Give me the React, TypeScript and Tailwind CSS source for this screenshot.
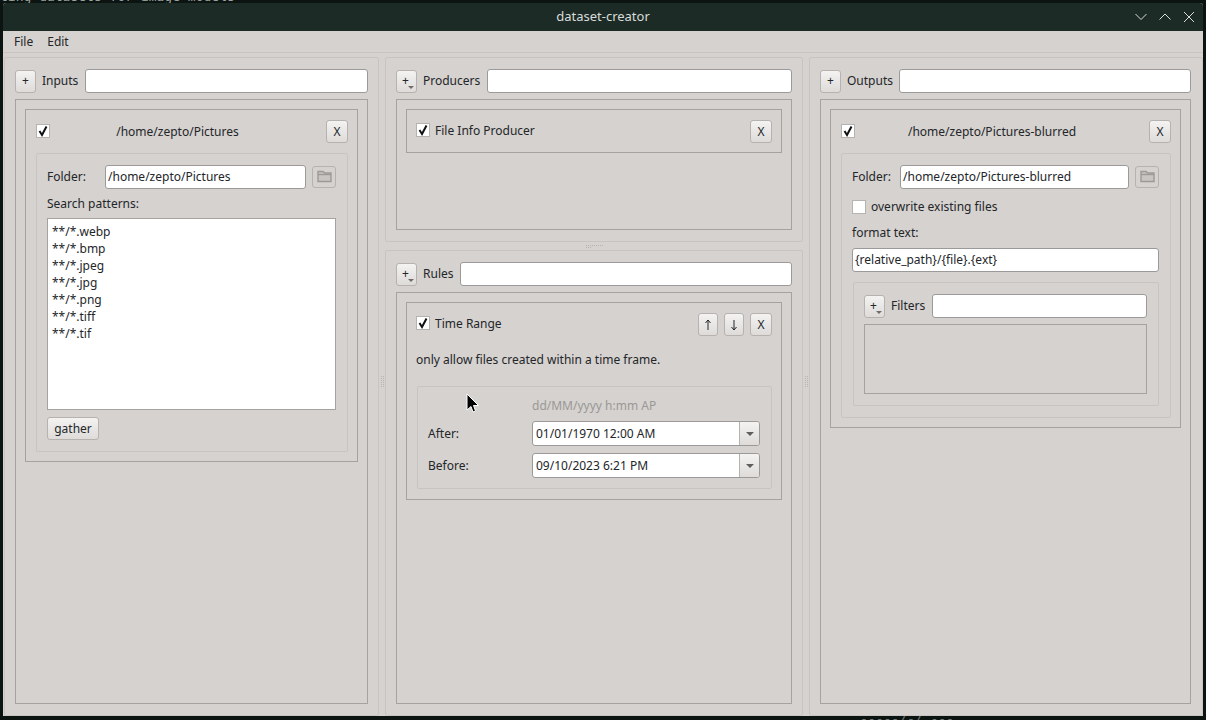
import React from 'react';

const sans = "font-['Noto_Sans',sans-serif]";

function PushButton({ children, className = '' }: { children?: React.ReactNode; className?: string }) {
  return (
    <div className={`relative flex shrink-0 items-center justify-center rounded-[3px] border border-[#b5b2af] bg-gradient-to-b from-[#f4f3f2] to-[#dedbd9] text-[#232629] ${className}`}>
      {children}
    </div>
  );
}

function MenuButton() {
  return (
    <PushButton className="h-[23px] w-[21px]">
      <span className="ml-[-2px]">+</span>
      <span className="absolute bottom-[3px] right-[2px] h-0 w-0 border-x-[3px] border-t-[3px] border-x-transparent border-t-[#6f6e6d]" />
    </PushButton>
  );
}

function TextBox({ value, className = '' }: { value?: string; className?: string }) {
  return (
    <div className={`flex h-[24px] items-center rounded-[3px] border border-[#9c9a98] bg-white pl-[2px] text-[#232629] ${className}`}>
      {value}
    </div>
  );
}

function Check({ on = true }: { on?: boolean }) {
  return (
    <div className="flex h-[14px] w-[14px] shrink-0 items-center justify-center border border-[#b5b2af] bg-white">
      {on && (
        <svg width="12" height="12" viewBox="0 0 12 12">
          <path d="M2.5 6 L5 10 L9.5 1.5" fill="none" stroke="#111" strokeWidth="2" />
        </svg>
      )}
    </div>
  );
}

function Arrow({ down = false }: { down?: boolean }) {
  return (
    <svg width="8" height="12" viewBox="0 0 8 12" className={down ? 'rotate-180' : ''}>
      <path d="M4 1 V11 M1.5 4 L4 1 L6.5 4" fill="none" stroke="#232629" strokeWidth="1" />
    </svg>
  );
}

function FolderButton() {
  return (
    <PushButton className="h-[22px] w-[24px] !bg-none bg-[#d6d2cf]">
      <svg width="15" height="13" viewBox="0 0 15 13">
        <path d="M1 11.5 V1.5 H6 L7.5 3 H14 V11.5 Z" fill="#c8c5c2" stroke="#9c9a98" strokeWidth="1.4" />
        <path d="M1 4.5 H14" stroke="#9c9a98" strokeWidth="1.4" />
      </svg>
    </PushButton>
  );
}

function Combo({ value }: { value: string }) {
  return (
    <div className="flex h-[25px] w-[228px] items-center rounded-[3px] border border-[#9c9a98] bg-white">
      <span className="flex-1 pl-[3px] text-[#232629]">{value}</span>
      <div className="flex h-full w-[20px] items-center justify-center rounded-r-[3px] border-l border-[#b5b2af] bg-gradient-to-b from-[#f4f3f2] to-[#dedbd9]">
        <span className="h-0 w-0 border-x-[4px] border-t-[4px] border-x-transparent border-t-[#5f5e5d]" />
      </div>
    </div>
  );
}

function Patterns() {
  const items = ['**/*.webp', '**/*.bmp', '**/*.jpeg', '**/*.jpg', '**/*.png', '**/*.tiff', '**/*.tif'];
  return (
    <div className="mt-[5px] h-[192px] w-[289px] border border-[#a5a29f] bg-white pl-[4px] pt-[4px]">
      {items.map((item) => (
        <div key={item} className="h-[17px] leading-[17px] text-[#232629]">{item}</div>
      ))}
    </div>
  );
}

function Dots({ vertical = false }: { vertical?: boolean }) {
  return (
    <div className={`grid gap-[1px] ${vertical ? 'grid-cols-2' : 'grid-cols-9'}`}>
      {Array.from({ length: 12 }).map((_, i) => (
        <span key={i} className="h-[1px] w-[1px] bg-[#b5b2af]" />
      ))}
    </div>
  );
}

function InputsPanel() {
  return (
    <section className="flex h-full w-[375px] shrink-0 flex-col rounded-[2px] border border-[#c8c4c1] px-[10px] pb-[11px] pt-[11px]">
      <div className="flex h-[24px] items-center">
        <PushButton className="h-[23px] w-[21px]">+</PushButton>
        <span className="ml-[6px] mr-[7px]">Inputs</span>
        <TextBox className="flex-1" />
      </div>
      <div className="mt-[6px] flex-1 border border-[#a5a29f] px-[9px] pt-[9px]">
        <div className="h-[353px] border border-[#a5a29f] pl-[10px] pr-[9px] pt-[10px]">
          <div className="flex h-[23px] items-center">
            <div className="mb-[2px]"><Check /></div>
            <span className="flex-1 pr-[21px] text-center">/home/zepto/Pictures</span>
            <PushButton className="h-[23px] w-[22px]">X</PushButton>
          </div>
          <div className="mt-[10px] h-[299px] w-[312px] rounded-[2px] border border-[#c8c4c1] px-[10px] pt-[11px]">
            <div className="flex h-[24px] items-center">
              <span className="w-[58px]">Folder:</span>
              <TextBox className="w-[201px]" value="/home/zepto/Pictures" />
              <div className="mb-[1px] ml-[6px]"><FolderButton /></div>
            </div>
            <div className="mt-[6px] h-[18px] leading-[18px]">Search patterns:</div>
            <Patterns />
            <PushButton className="mt-[7px] h-[23px] w-[52px]">gather</PushButton>
          </div>
        </div>
      </div>
    </section>
  );
}

function ProducersPanel() {
  return (
    <section className="h-[185px] shrink-0 rounded-[2px] border border-[#c8c4c1] px-[10px] pt-[11px]">
      <div className="flex h-[24px] items-center">
        <MenuButton />
        <span className="ml-[6px] mr-[7px]">Producers</span>
        <TextBox className="flex-1" />
      </div>
      <div className="mt-[6px] h-[131px] border border-[#a5a29f] px-[9px] pt-[9px]">
        <div className="flex h-[44px] items-start border border-[#a5a29f] pl-[9px] pr-[9px] pt-[10px]">
          <div className="mt-[3px]"><Check /></div>
          <span className="ml-[5px] flex-1 pt-[2px] leading-[18px]">File Info Producer</span>
          <PushButton className="h-[23px] w-[22px]">X</PushButton>
        </div>
      </div>
    </section>
  );
}

function RulesPanel() {
  return (
    <section className="min-h-0 flex-1 rounded-[2px] border border-[#c8c4c1] px-[10px] pt-[11px]">
      <div className="flex h-[24px] items-center">
        <MenuButton />
        <span className="ml-[6px] mr-[6px]">Rules</span>
        <TextBox className="flex-1" />
      </div>
      <div className="mt-[6px] h-[412px] border border-[#a5a29f] px-[9px] pt-[9px]">
        <div className="h-[198px] border border-[#a5a29f] pl-[9px] pr-[9px] pt-[10px]">
          <div className="flex items-start">
            <div className="mt-[3px]"><Check /></div>
            <span className="ml-[5px] flex-1 pt-[2px] leading-[18px]">Time Range</span>
            <PushButton className="h-[23px] w-[20px]"><Arrow /></PushButton>
            <PushButton className="ml-[6px] h-[23px] w-[20px]"><Arrow down /></PushButton>
            <PushButton className="ml-[6px] h-[23px] w-[22px]">X</PushButton>
          </div>
          <div className="mt-[15px] h-[18px] leading-[18px]">only allow files created within a time frame.</div>
          <div className="ml-[1px] mt-[17px] h-[103px] w-[355px] rounded-[2px] border border-[#c8c4c1] pl-[10px] pt-[10px]">
            <div className="ml-[104px] h-[17px] leading-[17px] text-[#9a9896]">dd/MM/yyyy h:mm AP</div>
            <div className="mt-[7px] flex items-center">
              <span className="w-[104px]">After:</span>
              <Combo value="01/01/1970 12:00 AM" />
            </div>
            <div className="mt-[7px] flex items-center">
              <span className="w-[104px]">Before:</span>
              <Combo value="09/10/2023 6:21 PM" />
            </div>
          </div>
        </div>
      </div>
    </section>
  );
}

function OutputsPanel() {
  return (
    <section className="flex h-full flex-1 flex-col rounded-[2px] border border-[#c8c4c1] pb-[11px] pl-[10px] pr-[11px] pt-[11px]">
      <div className="flex h-[24px] items-center">
        <PushButton className="h-[23px] w-[21px]">+</PushButton>
        <span className="ml-[6px] mr-[6px]">Outputs</span>
        <TextBox className="flex-1" />
      </div>
      <div className="mt-[6px] flex-1 border border-[#a5a29f] px-[9px] pt-[9px]">
        <div className="h-[319px] border border-[#a5a29f] pl-[10px] pr-[9px] pt-[10px]">
          <div className="flex h-[23px] items-center">
            <div className="mb-[2px]"><Check /></div>
            <span className="flex-1 pr-[20px] text-center">/home/zepto/Pictures-blurred</span>
            <PushButton className="h-[23px] w-[22px]">X</PushButton>
          </div>
          <div className="mt-[10px] h-[265px] w-[330px] rounded-[2px] border border-[#c8c4c1] px-[10px] pt-[11px]">
            <div className="flex h-[24px] items-center">
              <span className="w-[48px]">Folder:</span>
              <TextBox className="w-[229px]" value="/home/zepto/Pictures-blurred" />
              <div className="mb-[1px] ml-[6px]"><FolderButton /></div>
            </div>
            <div className="mt-[10px] flex items-center">
              <Check on={false} />
              <span className="ml-[5px] leading-[15px]">overwrite existing files</span>
            </div>
            <div className="mt-[10px] h-[18px] leading-[18px]">format text:</div>
            <TextBox className="mt-[6px] w-[307px]" value="{relative_path}/{file}.{ext}" />
            <div className="ml-[1px] mt-[10px] h-[124px] w-[306px] rounded-[2px] border border-[#c8c4c1] px-[10px] pt-[11px]">
              <div className="flex h-[24px] w-[283px] items-center">
                <MenuButton />
                <span className="ml-[6px] mr-[7px]">Filters</span>
                <TextBox className="flex-1" />
              </div>
              <div className="mt-[6px] h-[70px] w-[283px] border border-[#a5a29f]" />
            </div>
          </div>
        </div>
      </div>
    </section>
  );
}

export default function App() {
  return (
    <div className={`relative h-[720px] w-[1206px] overflow-hidden bg-[#0b1411] pb-[4px] pl-[3px] pr-[3px] pt-[3px] text-[12px] text-[#232629] ${sans}`}>
      {/* terminal behind the window */}
      <div className="absolute left-0 top-[-11px] whitespace-nowrap font-['DejaVu_Sans_Mono',monospace] text-[13px] leading-[15px] text-[#9aa3a0]">
        ting datasets for image models
      </div>
      <div className="absolute left-[860px] top-[711px] whitespace-nowrap font-['DejaVu_Sans_Mono',monospace] text-[13px] leading-[15px] text-[#6f7875]">
        -----/-/ ---.
      </div>

      <div className="relative flex h-full flex-col rounded-t-[3px] bg-[#d6d2cf]">
        <header className="relative flex h-[28px] shrink-0 items-center justify-center rounded-t-[3px] bg-[#1c2b26] text-[13px] text-[#d9dcda]">
          <span>dataset-creator</span>
          <div className="absolute right-[6px] top-0 flex h-full items-center gap-[8px]">
            <svg width="16" height="16" viewBox="0 0 16 16"><path d="M2.5 5 L8 10.5 L13.5 5" fill="none" stroke="#d9dcda" /></svg>
            <svg width="16" height="16" viewBox="0 0 16 16"><path d="M2.5 10.5 L8 5 L13.5 10.5" fill="none" stroke="#d9dcda" /></svg>
            <svg width="16" height="16" viewBox="0 0 16 16"><path d="M3 3 L13 13 M13 3 L3 13" fill="none" stroke="#d9dcda" /></svg>
          </div>
        </header>

        <nav className="flex h-[22px] shrink-0 items-center border-b border-[#c8c4c1] pl-[11px] pt-[1px]">
          <span>File</span>
          <span className="ml-[14px]">Edit</span>
        </nav>

        <main className="flex min-h-0 flex-1 items-stretch pl-[1px] pt-[4px]">
          <InputsPanel />
          <div className="flex w-[6px] shrink-0 items-center justify-center pb-[10px] pl-[1px]"><Dots vertical /></div>
          <div className="flex w-[418px] shrink-0 flex-col">
            <ProducersPanel />
            <div className="flex h-[8px] shrink-0 items-center justify-center"><Dots /></div>
            <RulesPanel />
          </div>
          <div className="flex w-[6px] shrink-0 items-center justify-center pb-[10px]"><Dots vertical /></div>
          <OutputsPanel />
        </main>
      </div>

      {/* mouse pointer */}
      <svg className="absolute left-[465px] top-[392px]" width="16" height="22" viewBox="0 0 16 22">
        <path d="M2 2 L2 18 L6 14.5 L8 20 L10.5 19 L8.5 13.5 L13.5 13.5 Z" fill="#000" stroke="#fff" strokeWidth="1" />
      </svg>
    </div>
  );
}
